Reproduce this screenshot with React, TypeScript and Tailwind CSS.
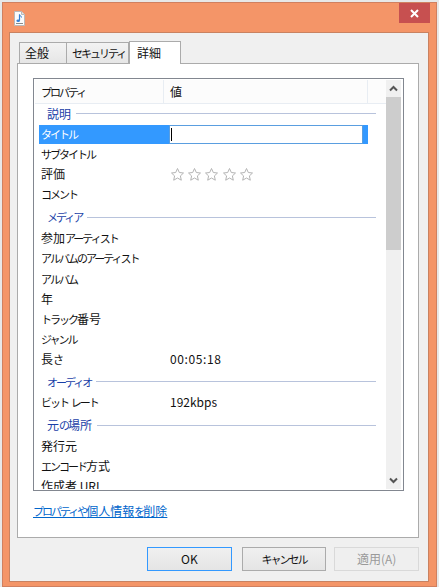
import type { ReactNode } from "react";

const FONT = "font-['Noto_Sans_CJK_JP','Noto_Sans',sans-serif]";

// the reference font sets kana narrower than kanji
function T({ s }: { s: string }) {
  return (
    <>
      {s.split(/([ァ-ヶーぁ-ん]+)/).map((part, i) =>
        i % 2 === 1 ? (
          <span key={i} className="text-[11px] tracking-[-2px]">{part}</span>
        ) : (
          <span key={i}>{part}</span>
        )
      )}
    </>
  );
}

function FileIcon() {
  return (
    <svg width="13" height="15" viewBox="0 0 13 15">
      <path d="M1.5 .5H8.5L11.5 3.5V14.5H1.5Z" fill="#fbfbfb" stroke="#b9b9b9" />
      <path d="M8.5 .5V3.5H11.5" fill="#e6e6e6" stroke="#b9b9b9" />
      <path d="M6.5 3.5V9.5" stroke="#2f7fd6" strokeWidth="1.2" />
      <path d="M6.5 3.5C7 5 8.5 5 8.5 6.5" stroke="#2f7fd6" fill="none" />
      <ellipse cx="5.2" cy="9.7" rx="1.8" ry="1.3" fill="#2f7fd6" />
      <path d="M3 12.5H10" stroke="#8a8a8a" />
    </svg>
  );
}

function Star() {
  return (
    <svg width="15" height="15" viewBox="0 0 15 15" className="mr-[2.2px]">
      <path
        d="M7.5 1.5L9.3 5.5L13.5 6L10.4 8.9L11.3 13.2L7.5 11L3.7 13.2L4.6 8.9L1.5 6L5.7 5.5Z"
        fill="#fff"
        stroke="#b4b4b4"
        strokeLinejoin="round"
      />
    </svg>
  );
}

function Section({ label, cls = "h-[23px]" }: { label: string; cls?: string }) {
  return (
    <div className={`flex items-center shrink-0 pl-[8px] pr-[10px] ${cls}`}>
      <span className="text-[#1a3fa8] mr-[5px] whitespace-nowrap"><T s={label} /></span>
      <div className="flex-1 h-px bg-[#b8c3dc]" />
    </div>
  );
}

function Row({ name, value, h = "h-[20px]" }: { name: string; value?: ReactNode; h?: string }) {
  return (
    <div className={`flex items-center shrink-0 pb-[2px] ${h}`}>
      <span className="w-[135px] pl-[6px] text-[#111] whitespace-nowrap"><T s={name} /></span>
      {value}
    </div>
  );
}

export default function App() {
  return (
    <div className={`w-[439px] h-[587px] bg-[#e8e8e8] pt-[2px] px-[2px] overflow-hidden text-[12px] leading-[16px] ${FONT}`}>
      <div className="h-[585px] w-[435px] bg-[#f49568] border border-[#d08060] flex flex-col">
        <div className="h-[29px] shrink-0 flex items-start justify-between pl-[10px] pr-[6px]">
          <div className="pt-[8px]">
            <FileIcon />
          </div>
          <div className="w-[31px] h-[20px] bg-[#c75050] flex items-center justify-center">
            <svg width="9" height="9" viewBox="0 0 9 9">
              <path d="M1 1L8 8M8 1L1 8" stroke="#fff" strokeWidth="2" />
            </svg>
          </div>
        </div>

        <div className="mx-[6px] w-[420px] h-[550px] bg-[#f0f0f0] border border-[#c98261] flex flex-col pl-[7px] pr-[9px]">
          <div className="h-[30px] shrink-0 flex items-end pl-[2px]">
            <div className="w-[48px] h-[21px] bg-gradient-to-b from-[#f3f3f3] to-[#e6e6e6] border border-[#ababab] border-b-0 pl-[5px] text-[#111] flex items-center">全般</div>
            <div className="w-[62px] h-[21px] bg-gradient-to-b from-[#f3f3f3] to-[#e6e6e6] border border-[#ababab] border-b-0 border-l-0 pl-[5px] text-[#111] flex items-center whitespace-nowrap"><T s="セキュリティ" /></div>
            <div className="w-[52px] h-[23px] -mb-px z-10 bg-white border border-[#ababab] border-b-0 pl-[7px] text-[#111] flex items-center">詳細</div>
          </div>

          <div className="w-[402px] h-[475px] bg-white border border-[#ababab] flex flex-col pt-[14px] pl-[15px]">
            <div className="w-[371px] h-[413px] border border-[#828790] flex overflow-hidden p-px shrink-0">
              <div className="flex-1 min-w-0 flex flex-col overflow-hidden">
                <div className="h-[24px] shrink-0 flex bg-[#fcfcfc] border-b border-[#e8edf3]">
                  <div className="w-[128px] ml-px pl-[5px] flex items-center border-r border-[#e8edf3] text-[#111]"><T s="プロパティ" /></div>
                  <div className="w-[204px] pl-[6px] flex items-center border-r border-[#e8edf3] text-[#111]">値</div>
                </div>
                <div className="pl-[4px] flex flex-col">
                  <Section label="説明" cls="h-[21px] pb-[2px]" />
                  <div className="h-[19px] w-[329px] shrink-0 bg-[#3399ff] flex items-center text-white">
                    <span className="w-[130px] pl-[2px] pb-[2px]"><T s="タイトル" /></span>
                    <div className="w-[194px] h-[19px] bg-white border border-[#5a9ee0] flex items-center pl-[1px]">
                      <div className="w-px h-[13px] bg-black" />
                    </div>
                  </div>
                  <div className="-ml-[4px]">
                    <Row name="サブタイトル" h="h-[21px]" />
                    <Row
                      name="評価"
                      value={
                        <div className="flex">
                          <Star />
                          <Star />
                          <Star />
                          <Star />
                          <Star />
                        </div>
                      }
                    />
                    <Row name="コメント" />
                  </div>
                  <Section label="メディア" cls="h-[24px]" />
                  <div className="-ml-[4px]">
                    <Row name="参加アーティスト" />
                    <Row name="アルバムのアーティスト" />
                    <Row name="アルバム" h="h-[21px]" />
                    <Row name="年" />
                    <Row name="トラック番号" />
                    <Row name="ジャンル" />
                    <Row name="長さ" value={<span className="text-[#111] tracking-[0.6px]">00:05:18</span>} />
                  </div>
                  <Section label="オーディオ" />
                  <div className="-ml-[4px]">
                    <Row name="ビット レート" value={<span className="text-[#111]">192kbps</span>} />
                  </div>
                  <Section label="元の場所" cls="h-[24px]" />
                  <div className="-ml-[4px]">
                    <Row name="発行元" />
                    <Row name="エンコード方式" />
                    <Row name="作成者 URL" />
                  </div>
                </div>
              </div>

              <div className="w-[15px] shrink-0 bg-[#f0f0f0] flex flex-col mr-px">
                <div className="h-[17px] flex items-center justify-center">
                  <svg width="9" height="7" viewBox="0 0 9 7">
                    <path d="M1 5.5L4.5 2L8 5.5" fill="none" stroke="#555" strokeWidth="2" />
                  </svg>
                </div>
                <div className="h-[153px] bg-[#cdcdcd]" />
                <div className="flex-1" />
                <div className="h-[17px] flex items-center justify-center">
                  <svg width="9" height="7" viewBox="0 0 9 7">
                    <path d="M1 1.5L4.5 5L8 1.5" fill="none" stroke="#555" strokeWidth="2" />
                  </svg>
                </div>
              </div>
            </div>
            <div className="pt-[12px]">
              <span className="text-[#0066cc] underline whitespace-nowrap"><T s="プロパティや個人情報を削除" /></span>
            </div>
          </div>

          <div className="flex mt-[9px] pl-[130px] text-[#111]">
            <div className="w-[86px] h-[24px] border border-[#3399ff] bg-gradient-to-b from-[#f0f0f0] to-[#e5e5e5] flex items-center justify-center">OK</div>
            <div className="w-[86px] h-[24px] ml-[10px] border border-[#ababab] bg-gradient-to-b from-[#f0f0f0] to-[#e5e5e5] flex items-center justify-center"><T s="キャンセル" /></div>
            <div className="w-[86px] h-[24px] ml-[8px] border border-[#d9d9d9] bg-[#efefef] text-[#9a9a9a] flex items-center justify-center">適用(A)</div>
          </div>
        </div>
      </div>
    </div>
  );
}
